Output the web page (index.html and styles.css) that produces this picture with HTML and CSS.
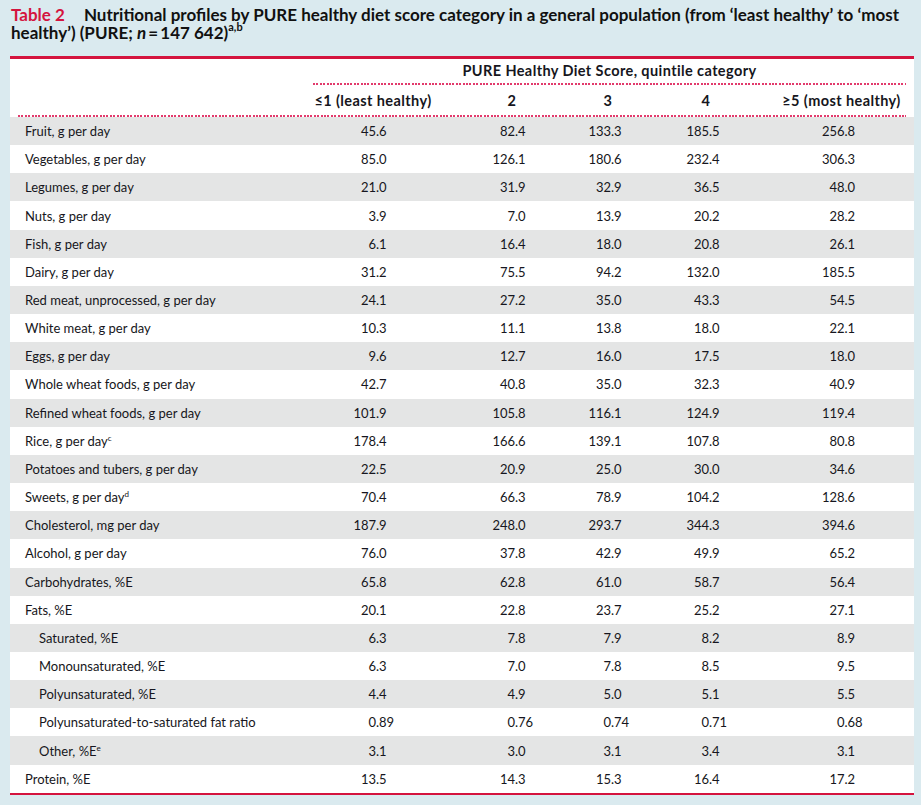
FILE: index.html
```html
<!DOCTYPE html>
<html lang="en">
<head>
<meta charset="utf-8">
<title>Table 2</title>
<link rel="stylesheet" href="styles.css">
</head>
<body>
<div class="page">
  <h1 class="title"><span class="tlabel">Table 2</span>Nutritional profiles by PURE healthy diet score category in a general population (from ‘least healthy’ to ‘most<br>healthy’) (PURE; <i>n</i>&#8201;=&#8201;147 642)<sup>a,b</sup></h1>
  <div class="table">
    <div class="row head1">
      <div></div>
      <div class="spanhead"><div class="spantext">PURE Healthy Diet Score, quintile category</div><div class="dots"></div></div>
    </div>
    <div class="row head2">
      <div></div>
      <div class="ch">≤1 (least healthy)</div>
      <div class="ch">2</div>
      <div class="ch">3</div>
      <div class="ch">4</div>
      <div class="ch">≥5 (most healthy)</div>
    </div>
    <div class="dots full"></div>

    <div class="row alt"><div class="lab">Fruit, g per day</div><div class="n"><span class="i">45</span><span class="f">.6</span></div><div class="n"><span class="i">82</span><span class="f">.4</span></div><div class="n"><span class="i">133</span><span class="f">.3</span></div><div class="n"><span class="i">185</span><span class="f">.5</span></div><div class="n"><span class="i">256</span><span class="f">.8</span></div></div>
    <div class="row"><div class="lab">Vegetables, g per day</div><div class="n"><span class="i">85</span><span class="f">.0</span></div><div class="n"><span class="i">126</span><span class="f">.1</span></div><div class="n"><span class="i">180</span><span class="f">.6</span></div><div class="n"><span class="i">232</span><span class="f">.4</span></div><div class="n"><span class="i">306</span><span class="f">.3</span></div></div>
    <div class="row alt"><div class="lab">Legumes, g per day</div><div class="n"><span class="i">21</span><span class="f">.0</span></div><div class="n"><span class="i">31</span><span class="f">.9</span></div><div class="n"><span class="i">32</span><span class="f">.9</span></div><div class="n"><span class="i">36</span><span class="f">.5</span></div><div class="n"><span class="i">48</span><span class="f">.0</span></div></div>
    <div class="row"><div class="lab">Nuts, g per day</div><div class="n"><span class="i">3</span><span class="f">.9</span></div><div class="n"><span class="i">7</span><span class="f">.0</span></div><div class="n"><span class="i">13</span><span class="f">.9</span></div><div class="n"><span class="i">20</span><span class="f">.2</span></div><div class="n"><span class="i">28</span><span class="f">.2</span></div></div>
    <div class="row alt"><div class="lab">Fish, g per day</div><div class="n"><span class="i">6</span><span class="f">.1</span></div><div class="n"><span class="i">16</span><span class="f">.4</span></div><div class="n"><span class="i">18</span><span class="f">.0</span></div><div class="n"><span class="i">20</span><span class="f">.8</span></div><div class="n"><span class="i">26</span><span class="f">.1</span></div></div>
    <div class="row"><div class="lab">Dairy, g per day</div><div class="n"><span class="i">31</span><span class="f">.2</span></div><div class="n"><span class="i">75</span><span class="f">.5</span></div><div class="n"><span class="i">94</span><span class="f">.2</span></div><div class="n"><span class="i">132</span><span class="f">.0</span></div><div class="n"><span class="i">185</span><span class="f">.5</span></div></div>
    <div class="row alt"><div class="lab">Red meat, unprocessed, g per day</div><div class="n"><span class="i">24</span><span class="f">.1</span></div><div class="n"><span class="i">27</span><span class="f">.2</span></div><div class="n"><span class="i">35</span><span class="f">.0</span></div><div class="n"><span class="i">43</span><span class="f">.3</span></div><div class="n"><span class="i">54</span><span class="f">.5</span></div></div>
    <div class="row"><div class="lab">White meat, g per day</div><div class="n"><span class="i">10</span><span class="f">.3</span></div><div class="n"><span class="i">11</span><span class="f">.1</span></div><div class="n"><span class="i">13</span><span class="f">.8</span></div><div class="n"><span class="i">18</span><span class="f">.0</span></div><div class="n"><span class="i">22</span><span class="f">.1</span></div></div>
    <div class="row alt"><div class="lab">Eggs, g per day</div><div class="n"><span class="i">9</span><span class="f">.6</span></div><div class="n"><span class="i">12</span><span class="f">.7</span></div><div class="n"><span class="i">16</span><span class="f">.0</span></div><div class="n"><span class="i">17</span><span class="f">.5</span></div><div class="n"><span class="i">18</span><span class="f">.0</span></div></div>
    <div class="row"><div class="lab">Whole wheat foods, g per day</div><div class="n"><span class="i">42</span><span class="f">.7</span></div><div class="n"><span class="i">40</span><span class="f">.8</span></div><div class="n"><span class="i">35</span><span class="f">.0</span></div><div class="n"><span class="i">32</span><span class="f">.3</span></div><div class="n"><span class="i">40</span><span class="f">.9</span></div></div>
    <div class="row alt"><div class="lab">Refined wheat foods, g per day</div><div class="n"><span class="i">101</span><span class="f">.9</span></div><div class="n"><span class="i">105</span><span class="f">.8</span></div><div class="n"><span class="i">116</span><span class="f">.1</span></div><div class="n"><span class="i">124</span><span class="f">.9</span></div><div class="n"><span class="i">119</span><span class="f">.4</span></div></div>
    <div class="row"><div class="lab">Rice, g per day<sup>c</sup></div><div class="n"><span class="i">178</span><span class="f">.4</span></div><div class="n"><span class="i">166</span><span class="f">.6</span></div><div class="n"><span class="i">139</span><span class="f">.1</span></div><div class="n"><span class="i">107</span><span class="f">.8</span></div><div class="n"><span class="i">80</span><span class="f">.8</span></div></div>
    <div class="row alt"><div class="lab">Potatoes and tubers, g per day</div><div class="n"><span class="i">22</span><span class="f">.5</span></div><div class="n"><span class="i">20</span><span class="f">.9</span></div><div class="n"><span class="i">25</span><span class="f">.0</span></div><div class="n"><span class="i">30</span><span class="f">.0</span></div><div class="n"><span class="i">34</span><span class="f">.6</span></div></div>
    <div class="row"><div class="lab">Sweets, g per day<sup>d</sup></div><div class="n"><span class="i">70</span><span class="f">.4</span></div><div class="n"><span class="i">66</span><span class="f">.3</span></div><div class="n"><span class="i">78</span><span class="f">.9</span></div><div class="n"><span class="i">104</span><span class="f">.2</span></div><div class="n"><span class="i">128</span><span class="f">.6</span></div></div>
    <div class="row alt"><div class="lab">Cholesterol, mg per day</div><div class="n"><span class="i">187</span><span class="f">.9</span></div><div class="n"><span class="i">248</span><span class="f">.0</span></div><div class="n"><span class="i">293</span><span class="f">.7</span></div><div class="n"><span class="i">344</span><span class="f">.3</span></div><div class="n"><span class="i">394</span><span class="f">.6</span></div></div>
    <div class="row"><div class="lab">Alcohol, g per day</div><div class="n"><span class="i">76</span><span class="f">.0</span></div><div class="n"><span class="i">37</span><span class="f">.8</span></div><div class="n"><span class="i">42</span><span class="f">.9</span></div><div class="n"><span class="i">49</span><span class="f">.9</span></div><div class="n"><span class="i">65</span><span class="f">.2</span></div></div>
    <div class="row alt"><div class="lab">Carbohydrates, %E</div><div class="n"><span class="i">65</span><span class="f">.8</span></div><div class="n"><span class="i">62</span><span class="f">.8</span></div><div class="n"><span class="i">61</span><span class="f">.0</span></div><div class="n"><span class="i">58</span><span class="f">.7</span></div><div class="n"><span class="i">56</span><span class="f">.4</span></div></div>
    <div class="row"><div class="lab">Fats, %E</div><div class="n"><span class="i">20</span><span class="f">.1</span></div><div class="n"><span class="i">22</span><span class="f">.8</span></div><div class="n"><span class="i">23</span><span class="f">.7</span></div><div class="n"><span class="i">25</span><span class="f">.2</span></div><div class="n"><span class="i">27</span><span class="f">.1</span></div></div>
    <div class="row alt"><div class="lab sub">Saturated, %E</div><div class="n"><span class="i">6</span><span class="f">.3</span></div><div class="n"><span class="i">7</span><span class="f">.8</span></div><div class="n"><span class="i">7</span><span class="f">.9</span></div><div class="n"><span class="i">8</span><span class="f">.2</span></div><div class="n"><span class="i">8</span><span class="f">.9</span></div></div>
    <div class="row"><div class="lab sub">Monounsaturated, %E</div><div class="n"><span class="i">6</span><span class="f">.3</span></div><div class="n"><span class="i">7</span><span class="f">.0</span></div><div class="n"><span class="i">7</span><span class="f">.8</span></div><div class="n"><span class="i">8</span><span class="f">.5</span></div><div class="n"><span class="i">9</span><span class="f">.5</span></div></div>
    <div class="row alt"><div class="lab sub">Polyunsaturated, %E</div><div class="n"><span class="i">4</span><span class="f">.4</span></div><div class="n"><span class="i">4</span><span class="f">.9</span></div><div class="n"><span class="i">5</span><span class="f">.0</span></div><div class="n"><span class="i">5</span><span class="f">.1</span></div><div class="n"><span class="i">5</span><span class="f">.5</span></div></div>
    <div class="row"><div class="lab sub">Polyunsaturated-to-saturated fat ratio</div><div class="n"><span class="i">0</span><span class="f">.89</span></div><div class="n"><span class="i">0</span><span class="f">.76</span></div><div class="n"><span class="i">0</span><span class="f">.74</span></div><div class="n"><span class="i">0</span><span class="f">.71</span></div><div class="n"><span class="i">0</span><span class="f">.68</span></div></div>
    <div class="row alt"><div class="lab sub">Other, %E<sup>e</sup></div><div class="n"><span class="i">3</span><span class="f">.1</span></div><div class="n"><span class="i">3</span><span class="f">.0</span></div><div class="n"><span class="i">3</span><span class="f">.1</span></div><div class="n"><span class="i">3</span><span class="f">.4</span></div><div class="n"><span class="i">3</span><span class="f">.1</span></div></div>
    <div class="row"><div class="lab">Protein, %E</div><div class="n"><span class="i">13</span><span class="f">.5</span></div><div class="n"><span class="i">14</span><span class="f">.3</span></div><div class="n"><span class="i">15</span><span class="f">.3</span></div><div class="n"><span class="i">16</span><span class="f">.4</span></div><div class="n"><span class="i">17</span><span class="f">.2</span></div></div>
  </div>
</div>
</body>
</html>
```

FILE: styles.css
```css
html, body {
  margin: 0;
  padding: 0;
  background: #daeaef;
}
body {
  font-family: Lato, "Open Sans", sans-serif;
  color: #161620;
}
.page {
  width: 921px;
  height: 805px;
  overflow: hidden;
}
.title {
  margin: 0;
  padding: 6px 0 0 11px;
  height: 56px;
  box-sizing: border-box;
  font-size: 17px;
  line-height: 18px;
  font-weight: 700;
  color: #111;
}
.title i {
  font-style: italic;
}
.title sup {
  font-size: 11px;
  line-height: 0;
  vertical-align: 8px;
}
.tlabel {
  color: #d4143e;
  margin-right: 19px;
}
.table {
  margin-left: 10px;
  width: 904px;
  background: #fff;
  border-top: 3px solid #d4143e;
  border-bottom: 2px solid #d4143e;
}
.row {
  display: grid;
  grid-template-columns: 285px 140px 138px 54px 142px 129px;
  padding: 0 8px;
  height: 28.17px;
  align-items: center;
  font-size: 13px;
}
.row.alt {
  background: #e4e5e5;
}
.head1 {
  height: 26px;
  grid-template-columns: 285px 603px;
  align-items: stretch;
  font-size: 14.5px;
}
.spanhead {
  display: flex;
  flex-direction: column;
  justify-content: flex-end;
  margin-left: 10px;
}
.spantext {
  font-weight: 700;
  text-align: center;
  letter-spacing: 0.4px;
  padding-bottom: 4px;
}
.dots {
  height: 2px;
  background: repeating-linear-gradient(to right, #e23a6c 0 2px, transparent 2px 3.4px);
}
.dots.full {
  margin: 0 8px;
}
.head2 {
  height: 30px;
  font-weight: 700;
  font-size: 14.5px;
  letter-spacing: 0.4px;
}
.ch {
  text-align: center;
  white-space: nowrap;
}
.lab {
  padding-left: 7px;
  white-space: nowrap;
}
.lab.sub {
  padding-left: 21px;
}
.lab sup {
  font-size: 8px;
  line-height: 0;
  vertical-align: 5px;
}
.n {
  display: flex;
  justify-content: center;
}
.i {
  width: 24px;
  text-align: right;
}
.f {
  width: 18px;
  text-align: left;
}
```
